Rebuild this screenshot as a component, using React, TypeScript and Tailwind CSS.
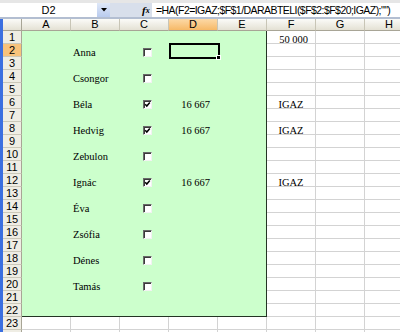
import React from "react";

const names: Record<number, string> = {
  2: "Anna",
  4: "Csongor",
  6: "Béla",
  8: "Hedvig",
  10: "Zebulon",
  12: "Ignác",
  14: "Éva",
  16: "Zsófia",
  18: "Dénes",
  20: "Tamás",
};
const checked = new Set([6, 8, 12]);
const cols = ["A", "B", "C", "D", "E", "F", "G", "H"];
const rows = Array.from({ length: 24 }, (_, i) => i + 1);

function CheckBox({ on }: { on: boolean }) {
  return (
    <div className="mt-[4px] ml-[23px] w-[9px] h-[9px] bg-white border-t border-l border-[#6a6a6a] border-r border-b border-r-[#f2f2f2] border-b-[#f2f2f2] shadow-[inset_1px_1px_0_#3a3a3a] flex items-center justify-center">
      {on && (
        <svg width="7" height="7" viewBox="0 0 7 7">
          <path d="M1.2 3.2 L2.8 5 L5.8 1.4" stroke="#000" strokeWidth="1.5" fill="none" />
        </svg>
      )}
    </div>
  );
}

function GreenCell({ r, c }: { r: number; c: number }) {
  if (c === 1 && names[r]) {
    return (
      <div className="h-[13px] pl-[2px] leading-[17px] whitespace-nowrap">{names[r]}</div>
    );
  }
  if (c === 2 && names[r]) {
    return (
      <div className="h-[13px] flex">
        <CheckBox on={checked.has(r)} />
      </div>
    );
  }
  if (c === 3 && r === 2) {
    return (
      <div className="h-[13px] relative">
        <div className="absolute left-0 top-[-1px] w-[51px] h-[16px] border-2 border-black" />
        <div className="absolute left-[47px] top-[11px] w-[5px] h-[5px] bg-black border border-white" />
      </div>
    );
  }
  if (c === 3 && checked.has(r)) {
    return (
      <div className="h-[13px] pr-[8px] text-right leading-[17px] whitespace-nowrap">16 667</div>
    );
  }
  return <div className="h-[13px]" />;
}

export default function App() {
  return (
    <div className="w-[400px] h-[332px] overflow-hidden bg-white font-['Liberation_Sans',Arial,sans-serif] text-black">
      <div className="h-[3px] bg-[#e6e6e6]" />
      <div className="h-[14px] flex text-[11px]">
        <div className="w-[97px] bg-white flex items-center justify-center leading-none">D2</div>
        <div className="w-[13px] bg-linear-to-b from-[#dfe8f8] to-[#b9cbee] flex items-center justify-center">
          <svg width="6" height="4" viewBox="0 0 6 4">
            <path d="M0 0 H6 L3 3.5 Z" fill="#000" />
          </svg>
        </div>
        <div className="w-[42px] bg-[#d8dfeb] flex items-center pl-[32px]">
          <span className="font-['Liberation_Serif',serif] italic font-bold text-[11px] leading-none">f</span>
          <span className="font-['Liberation_Serif',serif] italic font-bold text-[8px] leading-none mt-[2px]">x</span>
        </div>
        <div className="flex-1 bg-white pl-[4px] flex items-center whitespace-nowrap overflow-hidden text-[10.5px] tracking-[-0.55px] leading-none">
          =HA(F2=IGAZ;$F$1/DARABTELI($F$2:$F$20;IGAZ);"")
        </div>
      </div>
      <div className="h-[2px] bg-[#b3bed1]" />
      <div className="flex">
        <div className="w-[3px] shrink-0 bg-[#3b6fe0]" />
        <div className="grid grid-cols-[19px_repeat(8,49px)] grid-rows-[12px_repeat(24,13px)] text-[11px]">
          <div className="bg-linear-to-b from-[#fbfbf8] to-[#e4e1d4] border-r border-b border-[#a8a596]" />
          {cols.map((c) => (
            <div
              key={c}
              className={
                "flex items-center justify-center leading-none border-r border-b border-r-[#c8c5b6] border-b-[#a8a596] " +
                (c === "D"
                  ? "bg-linear-to-b from-[#fcd9a6] to-[#f6b966]"
                  : "bg-linear-to-b from-[#fbfbf8] to-[#e4e1d4]")
              }
            >
              {c}
            </div>
          ))}
          <div className="col-[2/7] row-[2/24] bg-[#ccffcc] border-r border-b border-[#243424] grid grid-cols-[49px_49px_49px_49px_48px] grid-rows-[repeat(22,13px)] font-['Liberation_Serif',serif] text-[10.5px]">
            {Array.from({ length: 22 }, (_, i) => i + 1).map((r) =>
              [0, 1, 2, 3, 4].map((c) => <GreenCell key={r + "-" + c} r={r} c={c} />)
            )}
          </div>
          {rows.map((r) => (
            <React.Fragment key={r}>
              <div
                className={
                  "flex items-center justify-center leading-none pt-[1px] border-r border-b border-r-[#a8a596] border-b-[#cbc8b9] " +
                  (r === 2 ? "bg-[#f8c37c]" : "bg-[#efede4]")
                }
              >
                {r <= 23 ? r : ""}
              </div>
              {(r <= 22 ? ["F", "G", "H"] : cols).map((c) => (
                <div
                  key={c}
                  className="bg-white border-r border-b border-[#d3d3d3] font-['Liberation_Serif',serif] text-[10.5px] leading-[17px] whitespace-nowrap overflow-visible"
                >
                  {c === "F" && r === 1 && <div className="text-right pr-[7px]">50 000</div>}
                  {c === "F" && checked.has(r) && <div className="text-center">IGAZ</div>}
                </div>
              ))}
            </React.Fragment>
          ))}
        </div>
      </div>
    </div>
  );
}
